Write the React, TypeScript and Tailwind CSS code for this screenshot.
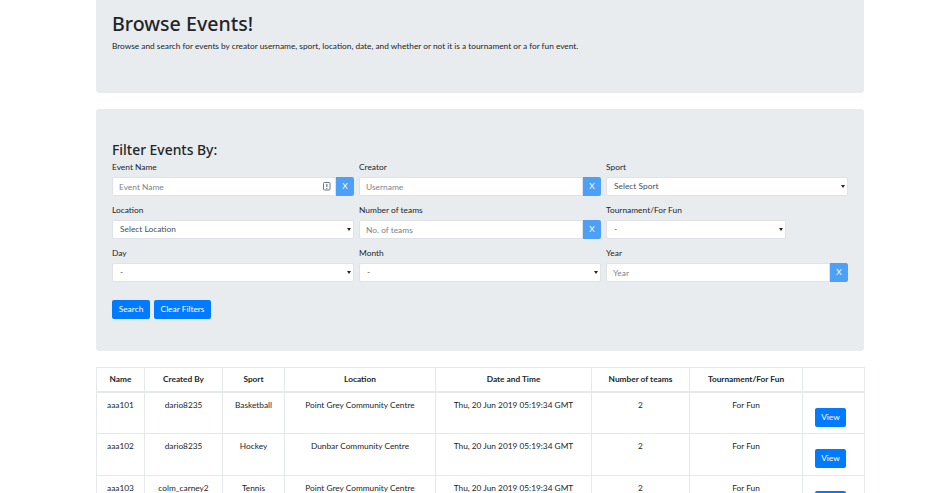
import React from 'react';

const inputClass =
  'block h-[19px] w-full min-w-0 bg-white border border-[#dfe3e8] px-[6px] text-[8.4px] text-[#495057] placeholder:text-[#7b848c] outline-none';

function ClearInput({ placeholder, icon }: { placeholder: string; icon?: boolean }) {
  return (
    <div className="flex h-[19px] items-stretch">
      <div className="relative flex-1 min-w-0">
        <input className={`${inputClass} rounded-l-[2px]`} placeholder={placeholder} />
        {icon && (
          <svg className="absolute right-[5px] top-[5px]" width="8" height="9" viewBox="0 0 8 9" fill="none">
            <rect x="0.5" y="0.5" width="6.5" height="7.5" rx="1" stroke="#6c757d" strokeWidth="1" />
            <rect x="3.2" y="2" width="1.2" height="3" fill="#6c757d" />
            <rect x="3.2" y="5.8" width="1.2" height="1.2" fill="#6c757d" />
          </svg>
        )}
      </div>
      <button className="w-[18px] shrink-0 rounded-r-[2px] bg-[#4da0f8] text-[8.4px] text-white">X</button>
    </div>
  );
}

function SelectBox({ value, className }: { value: string; className?: string }) {
  return (
    <div className={`relative h-[19px] ${className ?? 'w-full'}`}>
      <select
        defaultValue={value}
        className="block h-[19px] w-full appearance-none rounded-[2px] border border-[#dfe3e8] bg-white px-[7px] text-[8.4px] text-[#495057] outline-none"
      >
        <option>{value}</option>
      </select>
      <svg className="absolute right-[3px] top-[8px]" width="4" height="3" viewBox="0 0 4 3">
        <path d="M0 0H4L2 3Z" fill="#212529" />
      </svg>
    </div>
  );
}

function Field({ label, children }: { label: string; children: React.ReactNode }) {
  return (
    <div className="flex flex-col">
      <label className="mb-[3px] h-[14px] text-[8.4px] leading-[14px] text-[#212529]">{label}</label>
      {children}
    </div>
  );
}

const rows = [
  { name: 'aaa101', by: 'dario8235', sport: 'Basketball', location: 'Point Grey Community Centre' },
  { name: 'aaa102', by: 'dario8235', sport: 'Hockey', location: 'Dunbar Community Centre' },
  { name: 'aaa103', by: 'colm_carney2', sport: 'Tennis', location: 'Point Grey Community Centre' },
];

const headers = ['Name', 'Created By', 'Sport', 'Location', 'Date and Time', 'Number of teams', 'Tournament/For Fun', ''];

export default function App() {
  return (
    <div
      className="h-[493px] overflow-hidden bg-white text-[#212529]"
      style={{ fontFamily: 'Lato, sans-serif' }}
    >
      <div className="ml-[96px] w-[768px]">
        {/* Header */}
        <div className="mb-[16px] h-[93px] rounded-b-[3px] bg-[#e9ecef] px-[16px] pt-[10px]">
          <h1 className="font-['Noto_Sans'] text-[19.6px] font-medium leading-[28px] text-[#212529]">Browse Events!</h1>
          <p className="mt-[1px] text-[8.3px] leading-[14px]">
            Browse and search for events by creator username, sport, location, date, and whether or not it is a tournament or a for fun event.
          </p>
        </div>

        {/* Filters */}
        <div className="mb-[16px] h-[242px] rounded-[3px] bg-[#e9ecef] px-[16px] pt-[31px]">
          <h4 className="mb-[1px] font-['Noto_Sans'] text-[13.9px] font-medium leading-[19px]">Filter Events By:</h4>
          <div className="grid grid-cols-3 gap-x-[5px] gap-y-[7px]">
            <Field label="Event Name">
              <ClearInput placeholder="Event Name" icon />
            </Field>
            <Field label="Creator">
              <ClearInput placeholder="Username" />
            </Field>
            <Field label="Sport">
              <SelectBox value="Select Sport" />
            </Field>
            <Field label="Location">
              <SelectBox value="Select Location" />
            </Field>
            <Field label="Number of teams">
              <ClearInput placeholder="No. of teams" />
            </Field>
            <Field label="Tournament/For Fun">
              <SelectBox value="-" className="w-[180px]" />
            </Field>
            <Field label="Day">
              <SelectBox value="-" />
            </Field>
            <Field label="Month">
              <SelectBox value="-" />
            </Field>
            <Field label="Year">
              <ClearInput placeholder="Year" />
            </Field>
          </div>
          <div className="mt-[18px] flex gap-[4px]">
            <button className="h-[19px] w-[38px] rounded-[2px] bg-[#007bff] text-[8.4px] text-white">Search</button>
            <button className="h-[19px] w-[57px] rounded-[2px] bg-[#007bff] text-[8.4px] text-white">Clear Filters</button>
          </div>
        </div>

        {/* Events table */}
        <table className="w-[768px] table-fixed border-collapse text-center text-[8.3px]">
          <colgroup>
            <col className="w-[48px]" />
            <col className="w-[78px]" />
            <col className="w-[62px]" />
            <col className="w-[151px]" />
            <col className="w-[156px]" />
            <col className="w-[98px]" />
            <col className="w-[113px]" />
            <col className="w-[62px]" />
          </colgroup>
          <thead>
            <tr className="h-[24px]">
              {headers.map((h, i) => (
                <th key={i} className="border border-b-2 border-[#e6e9ec] font-bold text-[#212529]">
                  {h}
                </th>
              ))}
            </tr>
          </thead>
          <tbody>
            {rows.map((r) => (
              <tr key={r.name} className="h-[42px]">
                <td className="border border-[#e6e9ec] pt-[6px] align-top">{r.name}</td>
                <td className="border border-[#e6e9ec] pt-[6px] align-top">{r.by}</td>
                <td className="border border-[#e6e9ec] pt-[6px] align-top">{r.sport}</td>
                <td className="border border-[#e6e9ec] pt-[6px] align-top">{r.location}</td>
                <td className="border border-[#e6e9ec] pt-[6px] align-top">Thu, 20 Jun 2019 05:19:34 GMT</td>
                <td className="border border-[#e6e9ec] pt-[6px] align-top">2</td>
                <td className="border border-[#e6e9ec] pt-[6px] align-top">For Fun</td>
                <td className="border border-[#e6e9ec] pl-[12px] pt-[15px] text-left align-top">
                  <button className="block h-[19px] w-[31px] rounded-[2px] bg-[#007bff] text-[8.4px] text-white">View</button>
                </td>
              </tr>
            ))}
          </tbody>
        </table>
      </div>
    </div>
  );
}
